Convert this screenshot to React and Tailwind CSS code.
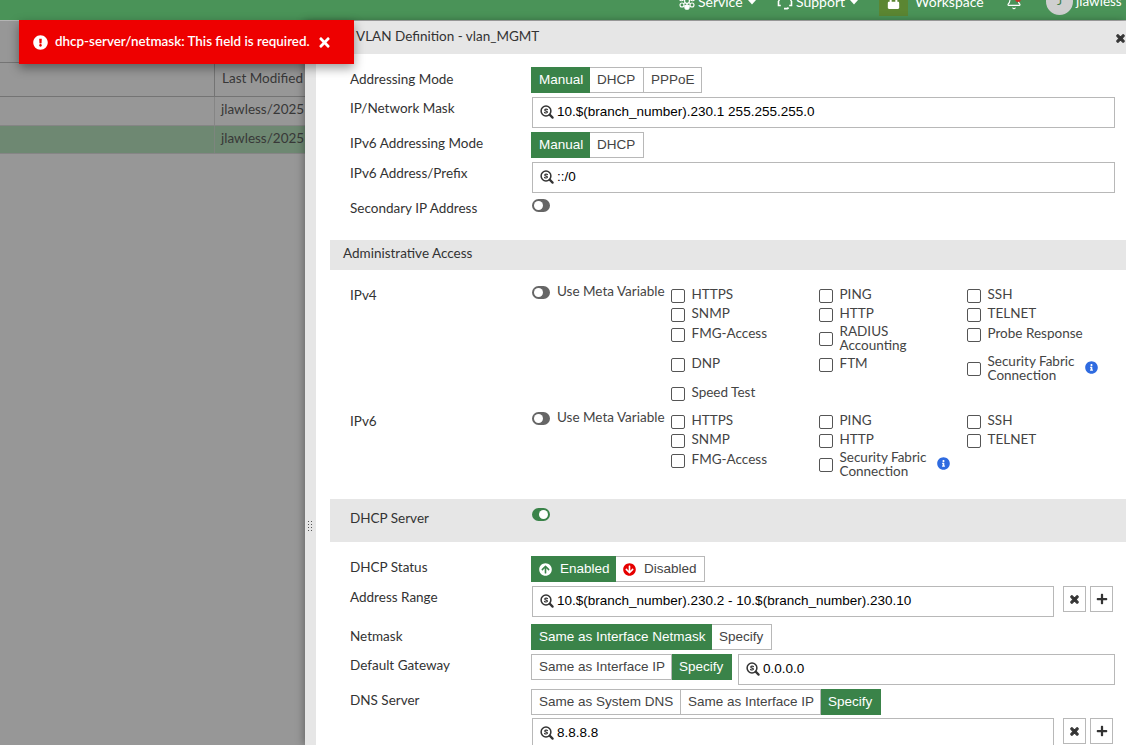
import React, { useState } from 'react';
import {
  FaArrowCircleDown,
  FaArrowCircleUp,
  FaExclamationCircle,
  FaInfoCircle,
  FaLock,
  FaPlus,
  FaTimes,
} from 'react-icons/fa';
import { Bell } from 'lucide-react';

const ipv4Access = [
  ['HTTPS', 'PING', 'SSH'],
  ['SNMP', 'HTTP', 'TELNET'],
  ['FMG-Access', 'RADIUS Accounting', 'Probe Response'],
  ['DNP', 'FTM', 'Security Fabric Connection'],
  ['Speed Test'],
];

const ipv6Access = [
  ['HTTPS', 'PING', 'SSH'],
  ['SNMP', 'HTTP', 'TELNET'],
  ['FMG-Access', 'Security Fabric Connection'],
];

const Caret = () => (
  <svg className="ml-[5px] mt-[3px] h-[5px] w-[8px]" viewBox="0 0 8 5" fill="currentColor">
    <path d="M0 0h8L4 4.5z" />
  </svg>
);

const ServiceIcon = () => (
  <svg className="mr-[3px] h-[17px] w-[16px]" viewBox="0 0 16 17" fill="none" stroke="currentColor" strokeWidth="1.1">
    <circle cx="8" cy="8" r="2.4" />
    <circle cx="8" cy="2.2" r="1.7" />
    <circle cx="8" cy="14.2" r="2.1" fill="currentColor" />
    <circle cx="2.4" cy="6" r="1.8" />
    <circle cx="13.6" cy="6" r="1.8" />
    <circle cx="3" cy="12" r="2" />
    <circle cx="13" cy="12" r="2" />
    <path d="M4 6.5l2 1M12 6.5l-2 1M4.5 10.7l1.9-1.3M11.5 10.7L9.6 9.4M8 4v2M8 10v2M5 12.8l1.5.6M11 12.8l-1.5.6" />
  </svg>
);

const HeadsetIcon = () => (
  <svg className="mr-[3px] h-[17px] w-[16px]" viewBox="0 0 16 17" fill="none" stroke="currentColor" strokeWidth="1.6">
    <path d="M2 8V7a6 6 0 0 1 12 0v1" />
    <path d="M3.8 12.5H1.5V8M12.2 12.5h2.3V8" />
    <path d="M7 15.6h3.2l1.4-.8" strokeWidth="1.8" />
  </svg>
);

const VariableIcon = () => (
  <svg className="mb-px h-[14px] w-[14px] shrink-0" viewBox="0 0 14 14" fill="none" stroke="#333" strokeLinecap="round">
    <circle cx="6" cy="6" r="4.9" strokeWidth="1.5" />
    <path d="M9.9 9.9l2.7 2.7" strokeWidth="2.2" />
    <path d="M7.5 4.6C7 3.9 4.7 3.9 4.7 5.1S7.5 5.9 7.5 7.1 5 8.2 4.5 7.4" strokeWidth="1.1" />
  </svg>
);

const Toggle = ({ initial = false }) => {
  const [on, setOn] = useState(initial);
  return (
    <button
      onClick={() => setOn(!on)}
      className={`flex h-[13px] w-[18px] shrink-0 items-center rounded-full border-2 ${
        on ? 'justify-end border-[#3a8349] bg-[#3a8349]' : 'justify-start border-[#666] bg-[#666]'
      }`}
    >
      <span className="h-[9px] w-[9px] shrink-0 rounded-full bg-white" />
    </button>
  );
};

const Segmented = ({ options, initial }) => {
  const [selected, setSelected] = useState(initial);
  return (
    <div className="flex h-[26px] shrink-0 font-['Liberation_Sans',sans-serif] text-[13.5px]">
      {options.map(({ label, icon, width }) => (
        <button
          key={label}
          onClick={() => setSelected(label)}
          className={`flex items-center whitespace-nowrap border-y border-r pl-[7px] first:border-l ${width} ${
            selected === label ? 'border-[#3a8349] bg-[#3a8349] text-white' : 'border-[#b8b8b8] bg-white text-[#444]'
          }`}
        >
          {icon}
          {label}
        </button>
      ))}
    </div>
  );
};

const VariableInput = ({ value, width }) => (
  <div className={`flex h-[31px] shrink-0 items-center border border-[#b8b8b8] bg-white pl-[7px] ${width}`}>
    <VariableIcon />
    <input
      defaultValue={value}
      className="ml-[3px] min-w-0 flex-1 pb-px font-['Liberation_Sans',sans-serif] text-[13.5px] text-black outline-none"
    />
  </div>
);

const RowButtons = () => (
  <div className="ml-[9px] flex gap-1">
    <button className="flex h-[26px] w-[23px] items-center justify-center border border-[#b8b8b8] text-[#333]">
      <FaTimes size={11} strokeWidth={50} stroke="currentColor" />
    </button>
    <button className="flex h-[26px] w-[23px] items-center justify-center border border-[#b8b8b8] text-[#333]">
      <FaPlus size={12} />
    </button>
  </div>
);

const FormRow = ({ label, height, labelPad = 'pt-[2px]', children }) => (
  <div className={`flex pl-[34px] ${height}`}>
    <label className={`w-[181px] shrink-0 leading-[20px] ${labelPad}`}>{label}</label>
    {children}
  </div>
);

const AccessList = ({ label, rows, height, tracks }) => (
  <FormRow label={label} height={height} labelPad="pt-0">
    <div className="flex w-[140px] shrink-0 items-start pl-px text-[#444]">
      <span className="mt-px">
        <Toggle />
      </span>
      <span className="-mt-[4px] ml-[7px] whitespace-nowrap leading-[20px]">Use Meta Variable</span>
    </div>
    <div className={`grid grid-cols-[148px_148px_155px] content-start ${tracks}`}>
      {rows.map((row, r) =>
        row.map((name, c) => (
          <label
            key={name}
            style={{ gridRow: r + 1, gridColumn: c + 1 }}
            className="flex min-h-[19px] items-center self-start text-[#444]"
          >
            <input
              type="checkbox"
              className="relative top-px h-[14px] w-[14px] shrink-0 appearance-none rounded-[2px] border border-[#555] bg-white checked:bg-[#3a8349]"
            />
            <span
              className={`ml-[6.5px] leading-[14px] ${
                name.length > 15 ? 'w-[94px]' : 'whitespace-nowrap pb-[2px]'
              }`}
            >
              {name}
            </span>
            {name.startsWith('Security') && <FaInfoCircle size={13} className="mb-[2px] ml-[3.5px] text-[#2f6be0]" />}
          </label>
        ))
      )}
    </div>
  </FormRow>
);

const TopBar = () => (
  <header className="h-[21px] overflow-hidden border-b border-[#b4b4b4] bg-[#4a9358] text-white">
    <div className="-mt-[17px] flex h-[36px] items-center pl-[679px] text-[14px]">
      <div className="flex w-[98px] items-center">
        <ServiceIcon />
        Service
        <Caret />
      </div>
      <div className="flex w-[102px] items-center">
        <HeadsetIcon />
        Support
        <Caret />
      </div>
      <div className="flex h-[30px] w-[29px] items-center justify-center bg-[#5b8632]">
        <FaLock size={13} className="mt-[3px]" />
      </div>
      <span className="ml-[7px] w-[91px]">Workspace</span>
      <div className="relative mt-px w-[40px]">
        <Bell size={16} strokeWidth={1.7} />
        <span className="absolute left-[9px] top-[2px] h-[6px] w-[6px] rounded-full bg-[#c8342b]" />
      </div>
      <div className="flex h-[27px] w-[27px] shrink-0 items-center justify-center rounded-full bg-[#cfcfcf] text-[12px] text-[#3c7d49]">
        J
      </div>
      <span className="ml-[3px] text-[13.5px]">jlawless</span>
    </div>
  </header>
);

const BackgroundTable = () => (
  <div className="w-[305px] shrink-0 overflow-hidden bg-[#979797] pt-[41px] text-[#383838]">
    <div className="flex h-[35px] border-y border-[#747474]">
      <div className="w-[215px] shrink-0 border-r border-[#747474]" />
      <div className="whitespace-nowrap pl-[7px] leading-[30px]">Last Modified</div>
    </div>
    <div className="flex h-[28px]">
      <div className="w-[215px] shrink-0 border-r border-[#858585]" />
      <div className="whitespace-nowrap pl-[6px] leading-[25px]">jlawless/2025</div>
    </div>
    <div className="flex h-[29px] border-y border-[#858585] bg-[#6e8872]">
      <div className="w-[215px] shrink-0 border-r border-[#7d857e]" />
      <div className="whitespace-nowrap pl-[6px] leading-[25px]">jlawless/2025</div>
    </div>
  </div>
);

const Toast = ({ onClose }) => (
  <div className="absolute left-[19px] top-[20px] z-20 flex h-[44px] w-[335px] items-center bg-[#ee0000] pl-[14px] text-white shadow-[0_4px_10px_rgba(0,0,0,0.4)]">
    <FaExclamationCircle size={15} />
    <span className="ml-[7px] whitespace-nowrap pb-px text-[13.4px] font-semibold">
      dhcp-server/netmask: This field is required.
    </span>
    <button onClick={onClose} className="ml-[7px]">
      <FaTimes size={15} />
    </button>
  </div>
);

const App = () => {
  const [showToast, setShowToast] = useState(true);

  return (
    <div className="relative flex h-[745px] w-[1126px] flex-col overflow-hidden bg-white font-['Lato',sans-serif] text-[13.5px] text-[#333]">
      <TopBar />
      {showToast && <Toast onClose={() => setShowToast(false)} />}

      <div className="flex min-h-0 flex-1">
        <BackgroundTable />

        <section className="flex min-w-0 flex-1 flex-col shadow-[-1px_0_8px_rgba(0,0,0,0.35)]">
          <div className="flex h-[33px] shrink-0 items-center justify-between bg-[#e6e6e6] pl-[51px]">
            <h2 className="pb-[2px]">VLAN Definition - vlan_MGMT</h2>
            <FaTimes size={11} className="mt-px" strokeWidth={50} stroke="currentColor" />
          </div>

          <div className="flex min-h-0 flex-1">
            {/* drag handle for resizing the panel */}
            <div className="flex w-[11px] shrink-0 justify-center bg-[#e6e6e6] pr-[2px] pt-[467px]">
              <div className="grid h-[11px] grid-cols-[1px_1px] grid-rows-[1px_1px_1px_1px] gap-x-[2px] gap-y-[2px]">
                {[...Array(8)].map((_, i) => (
                  <span key={i} className="bg-[#555]" />
                ))}
              </div>
            </div>

            <div className="flex-1 overflow-hidden bg-white pt-[13px]">
              <FormRow label="Addressing Mode" height="h-[30px]">
                <Segmented
                  initial="Manual"
                  options={[
                    { label: 'Manual', width: 'w-[59px]' },
                    { label: 'DHCP', width: 'w-[54px]' },
                    { label: 'PPPoE', width: 'w-[58px]' },
                  ]}
                />
              </FormRow>
              <FormRow label="IP/Network Mask" height="h-[35px]" labelPad="pt-px pr-px">
                <div className="pl-px">
                  <VariableInput value="10.$(branch_number).230.1 255.255.255.0" width="w-[583px]" />
                </div>
              </FormRow>
              <FormRow label="IPv6 Addressing Mode" height="h-[30px]" labelPad="pt-px">
                <Segmented
                  initial="Manual"
                  options={[
                    { label: 'Manual', width: 'w-[59px]' },
                    { label: 'DHCP', width: 'w-[54px]' },
                  ]}
                />
              </FormRow>
              <FormRow label="IPv6 Address/Prefix" height="h-[37px]" labelPad="pt-px">
                <div className="pl-px">
                  <VariableInput value="::/0" width="w-[583px]" />
                </div>
              </FormRow>
              <FormRow label="Secondary IP Address" height="h-[41px]" labelPad="pt-0 -mt-px">
                <div className="pl-px">
                  <Toggle />
                </div>
              </FormRow>

              <div className="ml-[14px] h-[30px] bg-[#e6e6e6] pl-[13px] leading-[26px]">Administrative Access</div>

              <div className="pt-[15px]">
                <AccessList
                  label="IPv4"
                  rows={ipv4Access}
                  height="h-[126px]"
                  tracks="grid-rows-[19px_20px_30px_29px_19px]"
                />
                <AccessList
                  label="IPv6"
                  rows={ipv6Access}
                  height="h-[88px]"
                  tracks="grid-rows-[19px_20px_30px]"
                />
              </div>

              <div className="ml-[14px] flex h-[43px] bg-[#e6e6e6] pl-[20px]">
                <span className="w-[182px] pt-[9px] leading-[20px]">DHCP Server</span>
                <div className="pt-[9px]">
                  <Toggle initial />
                </div>
              </div>

              <div className="pt-[14px]">
                <FormRow label="DHCP Status" height="h-[30px]" labelPad="pt-px">
                  <Segmented
                    initial="Enabled"
                    options={[
                      {
                        label: 'Enabled',
                        width: 'w-[85px]',
                        icon: <FaArrowCircleUp size={13} className="mr-[8px]" />,
                      },
                      {
                        label: 'Disabled',
                        width: 'w-[89px]',
                        icon: <FaArrowCircleDown size={13} className="mr-[8px] text-[#e60000]" />,
                      },
                    ]}
                  />
                </FormRow>
                <FormRow label="Address Range" height="h-[38px]" labelPad="pt-px">
                  <div className="flex pl-px">
                    <VariableInput value="10.$(branch_number).230.2 - 10.$(branch_number).230.10" width="w-[522px]" />
                    <RowButtons />
                  </div>
                </FormRow>
                <FormRow label="Netmask" height="h-[30px]">
                  <Segmented
                    initial="Same as Interface Netmask"
                    options={[
                      { label: 'Same as Interface Netmask', width: 'w-[181px]' },
                      { label: 'Specify', width: 'w-[60px]' },
                    ]}
                  />
                </FormRow>
                <FormRow label="Default Gateway" height="h-[35px]" labelPad="pt-px">
                  <Segmented
                    initial="Specify"
                    options={[
                      { label: 'Same as Interface IP', width: 'w-[141px]' },
                      { label: 'Specify', width: 'w-[60px]' },
                    ]}
                  />
                  <div className="pl-[6px]">
                    <VariableInput value="0.0.0.0" width="w-[377px]" />
                  </div>
                </FormRow>
                <FormRow label="DNS Server" height="h-[29px]" labelPad="pt-px">
                  <Segmented
                    initial="Specify"
                    options={[
                      { label: 'Same as System DNS', width: 'w-[150px]' },
                      { label: 'Same as Interface IP', width: 'w-[140px]' },
                      { label: 'Specify', width: 'w-[60px]' },
                    ]}
                  />
                </FormRow>
                <FormRow label="" height="h-[31px]">
                  <div className="flex pl-px">
                    <VariableInput value="8.8.8.8" width="w-[522px]" />
                    <RowButtons />
                  </div>
                </FormRow>
              </div>
            </div>
          </div>
        </section>
      </div>
    </div>
  );
};

export default App;
